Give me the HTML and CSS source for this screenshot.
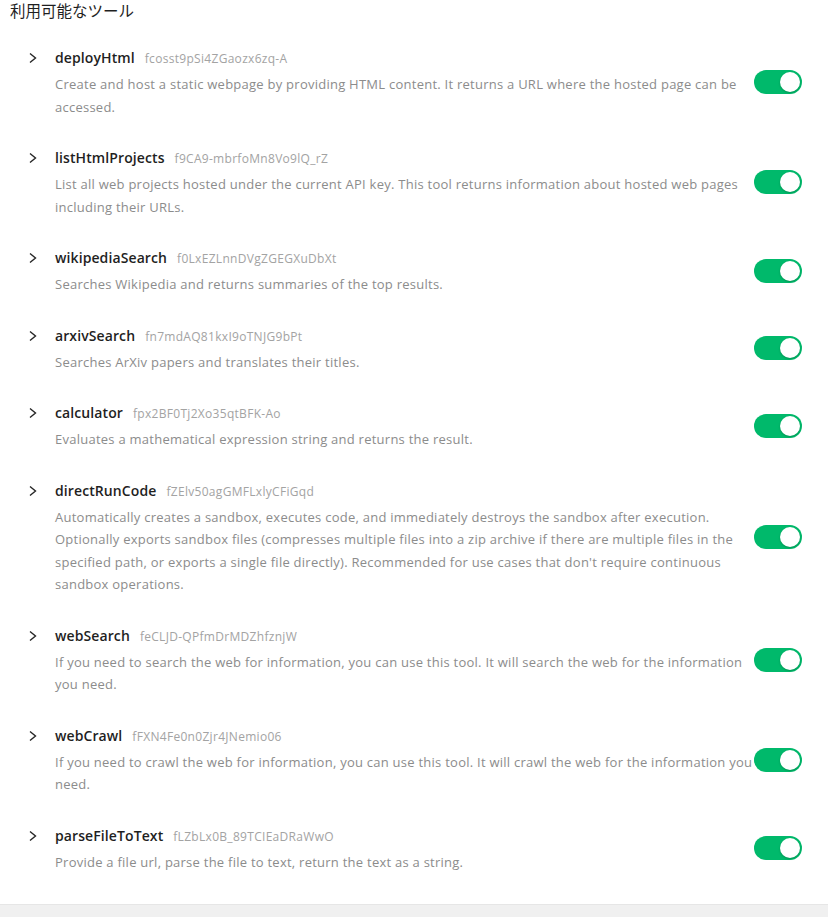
FILE: index.html
```html
<!DOCTYPE html>
<html lang="ja">
<head>
<meta charset="utf-8">
<title>利用可能なツール</title>
<link rel="stylesheet" href="styles.css">
</head>
<body>
<div class="page">
  <div class="title">利用可能なツール</div>
  <ul class="tools">
    <li class="tool">
      <div class="tool-main">
        <svg class="chev" viewBox="0 0 10 12" width="10" height="12"><path d="M2 1.5 L7.5 6 L2 10.5" fill="none" stroke="#262626" stroke-width="1.4"/></svg>
        <div class="tool-text">
          <div class="tool-head"><span class="name">deployHtml</span><span class="tid">fcosst9pSi4ZGaozx6zq-A</span></div>
          <p class="desc">Create and host a static webpage by providing HTML content. It returns a URL where the hosted page can be accessed.</p>
        </div>
      </div>
      <span class="switch"><span class="knob"></span></span>
    </li>
    <li class="tool">
      <div class="tool-main">
        <svg class="chev" viewBox="0 0 10 12" width="10" height="12"><path d="M2 1.5 L7.5 6 L2 10.5" fill="none" stroke="#262626" stroke-width="1.4"/></svg>
        <div class="tool-text">
          <div class="tool-head"><span class="name">listHtmlProjects</span><span class="tid">f9CA9-mbrfoMn8Vo9lQ_rZ</span></div>
          <p class="desc">List all web projects hosted under the current API key. This tool returns information about hosted web pages including their URLs.</p>
        </div>
      </div>
      <span class="switch"><span class="knob"></span></span>
    </li>
    <li class="tool">
      <div class="tool-main">
        <svg class="chev" viewBox="0 0 10 12" width="10" height="12"><path d="M2 1.5 L7.5 6 L2 10.5" fill="none" stroke="#262626" stroke-width="1.4"/></svg>
        <div class="tool-text">
          <div class="tool-head"><span class="name">wikipediaSearch</span><span class="tid">f0LxEZLnnDVgZGEGXuDbXt</span></div>
          <p class="desc">Searches Wikipedia and returns summaries of the top results.</p>
        </div>
      </div>
      <span class="switch"><span class="knob"></span></span>
    </li>
    <li class="tool">
      <div class="tool-main">
        <svg class="chev" viewBox="0 0 10 12" width="10" height="12"><path d="M2 1.5 L7.5 6 L2 10.5" fill="none" stroke="#262626" stroke-width="1.4"/></svg>
        <div class="tool-text">
          <div class="tool-head"><span class="name">arxivSearch</span><span class="tid">fn7mdAQ81kxI9oTNJG9bPt</span></div>
          <p class="desc">Searches ArXiv papers and translates their titles.</p>
        </div>
      </div>
      <span class="switch"><span class="knob"></span></span>
    </li>
    <li class="tool">
      <div class="tool-main">
        <svg class="chev" viewBox="0 0 10 12" width="10" height="12"><path d="M2 1.5 L7.5 6 L2 10.5" fill="none" stroke="#262626" stroke-width="1.4"/></svg>
        <div class="tool-text">
          <div class="tool-head"><span class="name">calculator</span><span class="tid">fpx2BF0Tj2Xo35qtBFK-Ao</span></div>
          <p class="desc">Evaluates a mathematical expression string and returns the result.</p>
        </div>
      </div>
      <span class="switch"><span class="knob"></span></span>
    </li>
    <li class="tool">
      <div class="tool-main">
        <svg class="chev" viewBox="0 0 10 12" width="10" height="12"><path d="M2 1.5 L7.5 6 L2 10.5" fill="none" stroke="#262626" stroke-width="1.4"/></svg>
        <div class="tool-text">
          <div class="tool-head"><span class="name">directRunCode</span><span class="tid">fZElv50agGMFLxlyCFiGqd</span></div>
          <p class="desc">Automatically creates a sandbox, executes code, and immediately destroys the sandbox after execution. Optionally exports sandbox files (compresses multiple files into a zip archive if there are multiple files in the specified path, or exports a single file directly). Recommended for use cases that don't require continuous sandbox operations.</p>
        </div>
      </div>
      <span class="switch"><span class="knob"></span></span>
    </li>
    <li class="tool">
      <div class="tool-main">
        <svg class="chev" viewBox="0 0 10 12" width="10" height="12"><path d="M2 1.5 L7.5 6 L2 10.5" fill="none" stroke="#262626" stroke-width="1.4"/></svg>
        <div class="tool-text">
          <div class="tool-head"><span class="name">webSearch</span><span class="tid">feCLJD-QPfmDrMDZhfznjW</span></div>
          <p class="desc">If you need to search the web for information, you can use this tool. It will search the web for the information you need.</p>
        </div>
      </div>
      <span class="switch"><span class="knob"></span></span>
    </li>
    <li class="tool">
      <div class="tool-main">
        <svg class="chev" viewBox="0 0 10 12" width="10" height="12"><path d="M2 1.5 L7.5 6 L2 10.5" fill="none" stroke="#262626" stroke-width="1.4"/></svg>
        <div class="tool-text">
          <div class="tool-head"><span class="name">webCrawl</span><span class="tid">fFXN4Fe0n0Zjr4JNemio06</span></div>
          <p class="desc">If you need to crawl the web for information, you can use this tool. It will crawl the web for the information you need.</p>
        </div>
      </div>
      <span class="switch"><span class="knob"></span></span>
    </li>
    <li class="tool">
      <div class="tool-main">
        <svg class="chev" viewBox="0 0 10 12" width="10" height="12"><path d="M2 1.5 L7.5 6 L2 10.5" fill="none" stroke="#262626" stroke-width="1.4"/></svg>
        <div class="tool-text">
          <div class="tool-head"><span class="name">parseFileToText</span><span class="tid">fLZbLx0B_89TCIEaDRaWwO</span></div>
          <p class="desc">Provide a file url, parse the file to text, return the text as a string.</p>
        </div>
      </div>
      <span class="switch"><span class="knob"></span></span>
    </li>
  </ul>
</div>
<div class="footer-band"></div>
</body>
</html>
```

FILE: styles.css
```css
html, body {
  margin: 0;
  padding: 0;
  background: #ffffff;
}
body {
  font-family: "Open Sans", "Noto Sans CJK JP", sans-serif;
  color: #1f1f1f;
}
.page {
  padding: 0 0 17px 0;
}
.title {
  padding: 0 10px;
  font-family: "Noto Sans CJK JP", sans-serif;
  font-size: 15.5px;
  line-height: 20px;
  color: #1f1f1f;
  margin-bottom: 12px;
}
.tools {
  list-style: none;
  margin: 0;
  padding: 0 26px 0 0;
}
.tool {
  display: flex;
  align-items: center;
  padding: 14px 0;
}
.tool-main {
  flex: 1;
  display: flex;
  align-items: flex-start;
  min-width: 0;
}
.chev {
  flex: none;
  margin: 6px 17px 0 28px;
}
.tool-text {
  flex: 1;
  min-width: 0;
}
.tool-head {
  display: flex;
  align-items: baseline;
  gap: 10px;
  line-height: 23px;
  height: 22px;
}
.name {
  font-size: 14px;
  font-weight: 600;
  color: #1f1f1f;
  letter-spacing: 0.1px;
}
.tid {
  font-size: 12px;
  color: #a3a3a3;
  letter-spacing: 0.3px;
}
.desc {
  margin: 5px 0 0 0;
  font-size: 13px;
  letter-spacing: 0.25px;
  line-height: 22.5px;
  color: #8c8c8c;
}
.switch {
  flex: none;
  width: 48px;
  height: 24px;
  border-radius: 12px;
  background: #00b96b;
  display: flex;
  align-items: center;
  justify-content: flex-end;
  padding: 0 2px;
  box-sizing: border-box;
}
.knob {
  width: 20px;
  height: 20px;
  border-radius: 50%;
  background: #ffffff;
  box-shadow: 0 1px 2px rgba(0, 35, 11, 0.25);
}
.footer-band {
  border-top: 1px solid #e6e6e6;
  background: #f0f0f0;
  height: 40px;
}
```
